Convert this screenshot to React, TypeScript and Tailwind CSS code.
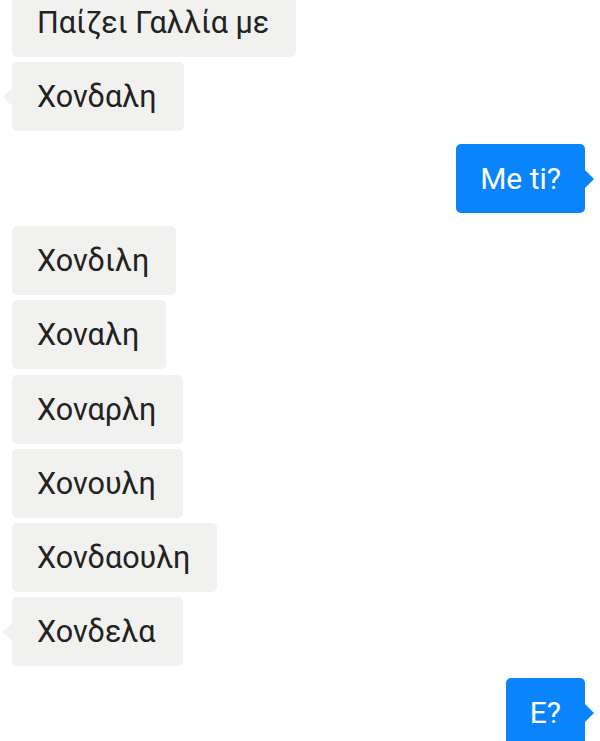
const font = { fontFamily: "Roboto, 'Noto Sans', sans-serif" };

type Msg = { text: string; me?: boolean; tail?: boolean; gapTop?: string };

const messages: Msg[] = [
  { text: "Παίζει Γαλλία με", gapTop: "-mt-[12px]" },
  { text: "Χονδαλη", tail: true, gapTop: "mt-[5px]" },
  { text: "Me ti?", me: true, tail: true, gapTop: "mt-[13px]" },
  { text: "Χονδιλη", gapTop: "mt-[13px]" },
  { text: "Χοναλη", gapTop: "mt-[5px]" },
  { text: "Χοναρλη", gapTop: "mt-[6px]" },
  { text: "Χονουλη", gapTop: "mt-[5px]" },
  { text: "Χονδαουλη", gapTop: "mt-[5px]" },
  { text: "Χονδελα", tail: true, gapTop: "mt-[5px]" },
  { text: "E?", me: true, tail: true, gapTop: "mt-[12px]" },
];

function Bubble({ m }: { m: Msg }) {
  if (m.me) {
    return (
      <div className={`flex justify-end pr-[15px] ${m.gapTop}`}>
        <div className="relative flex h-[69px] items-center rounded-[5px] bg-[#0a84fa] px-[24px] text-[30px] text-white">
          {m.text}
          {m.tail && (
            <span className="absolute right-[-9px] top-1/2 -translate-y-1/2 border-y-[9px] border-l-[9px] border-y-transparent border-l-[#0a84fa]" />
          )}
        </div>
      </div>
    );
  }
  return (
    <div className={`flex pl-[12px] ${m.gapTop}`}>
      <div className="relative flex h-[69px] items-center rounded-[5px] bg-[#f1f1ef] pl-[25px] pr-[27px] text-[30.5px] text-[#222222]">
        {m.text}
        {m.tail && (
          <span className="absolute left-[-9px] top-1/2 -translate-y-1/2 border-y-[9px] border-r-[9px] border-y-transparent border-r-[#f1f1ef]" />
        )}
      </div>
    </div>
  );
}

export default function App() {
  return (
    <div className="h-[741px] w-[600px] overflow-hidden bg-white" style={font}>
      <div className="flex flex-col">
        {messages.map((m, i) => (
          <Bubble key={i} m={m} />
        ))}
      </div>
    </div>
  );
}
